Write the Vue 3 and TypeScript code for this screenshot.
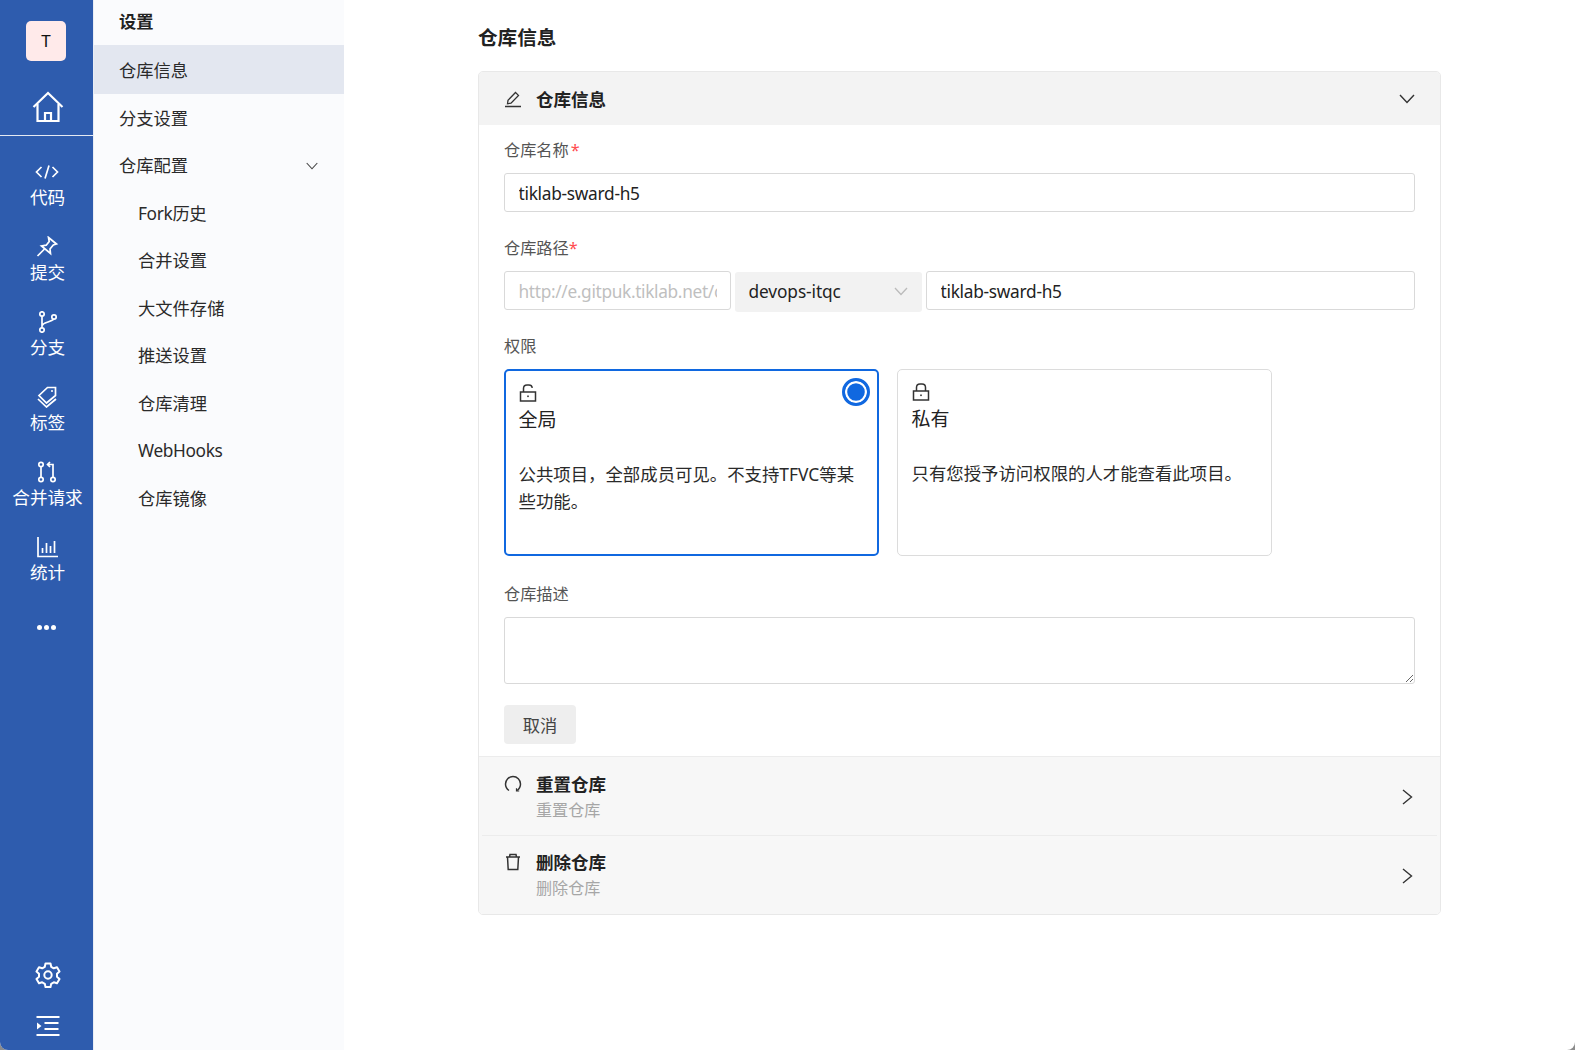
<script setup lang="ts">
const nav = [
  { key: 'code', label: '代码' },
  { key: 'pin', label: '提交' },
  { key: 'branch', label: '分支' },
  { key: 'tag', label: '标签' },
  { key: 'merge', label: '合并请求' },
  { key: 'chart', label: '统计' },
]
const children = [
  { text: 'Fork历史', latin: true },
  { text: '合并设置', latin: false },
  { text: '大文件存储', latin: false },
  { text: '推送设置', latin: false },
  { text: '仓库清理', latin: false },
  { text: 'WebHooks', latin: true },
  { text: '仓库镜像', latin: false },
]
</script>

<template>
  <div class="app">
    <aside class="rail">
      <div class="rail-top">
        <div class="logo">T</div>
        <svg class="home" width="32" height="32" viewBox="0 0 32 32" fill="none" stroke="#fff" stroke-width="2.200">
          <path d="M1.500 16 16 2l14.500 14" />
          <path d="M5.500 13v17h21V13" />
          <path d="M13 30v-8h6v8" />
        </svg>
      </div>
      <nav class="rail-nav">
        <div v-for="item in nav" :key="item.key" class="rail-item">
          <svg class="rail-icon" width="24" height="22" viewBox="0 0 24 22" fill="none" stroke="#fff" stroke-width="1.700">
            <template v-if="item.key === 'code'">
              <path d="M6.500 6 1.500 11l5 5M17.500 6l5 5-5 5M14 4.500 10 17.500" />
            </template>
            <template v-else-if="item.key === 'pin'">
              <path d="M13.500 1.500 21.500 8l-3.200 1-3.300 4 .5 4.500L6.500 10l4.700-.8 3-3.700z" />
              <path d="M9.500 13 2.500 20" />
            </template>
            <template v-else-if="item.key === 'branch'">
              <circle cx="7" cy="3" r="2.200" /><circle cx="7" cy="19" r="2.200" /><circle cx="19" cy="6" r="2.200" />
              <path d="M7 5.200v11.600M7 14.500c1-2 3-2.500 6-3.500 3-1 5-2 6-2.800" />
            </template>
            <template v-else-if="item.key === 'tag'">
              <path d="M12.500 1.500h8v8L11.500 17 4 9.500z" />
              <path d="M3 13l8.500 8L21 13" />
              <circle cx="17" cy="5" r="1" fill="#fff" stroke="none" />
            </template>
            <template v-else-if="item.key === 'merge'">
              <circle cx="6" cy="3.500" r="2.200" /><circle cx="6" cy="18.500" r="2.200" /><circle cx="18" cy="18.500" r="2.200" />
              <path d="M6 5.700v10.600M18 16.300V3.500h-5M15 1l-2.500 2.500L15 6" />
            </template>
            <template v-else>
              <path d="M3 1v19.500h20" />
              <path d="M7.500 17v-5M11.500 17V7M15.500 17v-7M19.500 17V5" />
            </template>
          </svg>
          <span class="rail-label">{{ item.label }}</span>
        </div>
        <div class="more"><i></i><i></i><i></i></div>
      </nav>
      <div class="rail-bottom">
        <svg width="26" height="26" viewBox="0 0 26 26" fill="none" stroke="#fff" stroke-width="2" stroke-linejoin="round">
          <path d="M10.500 1.500h5l.7 3.300 2.600 1.500 3.200-1 2.500 4.300-2.500 2.200v3l2.500 2.200-2.500 4.300-3.200-1-2.600 1.500-.7 3.300h-5l-.7-3.300-2.600-1.500-3.200 1-2.500-4.300 2.500-2.200v-3L1.500 9.600 4 5.300l3.200 1 2.600-1.500z" />
          <circle cx="13" cy="13" r="3.700" />
        </svg>
        <svg class="collapse" width="24" height="20" viewBox="0 0 24 20" fill="#fff">
          <rect x="0.500" y="0" width="23" height="2" />
          <rect x="8.500" y="6" width="14" height="2" />
          <rect x="8.500" y="12" width="14" height="2" />
          <rect x="0.500" y="18" width="23" height="2" />
          <path d="M1 6.500 5.500 10 1 13.500z" />
        </svg>
      </div>
    </aside>

    <aside class="menu">
      <div class="menu-title">设置</div>
      <div class="menu-item active">仓库信息</div>
      <div class="menu-item">分支设置</div>
      <div class="menu-item between">
        <span>仓库配置</span>
        <svg width="12" height="8" viewBox="0 0 12 8" fill="none" stroke="#444" stroke-width="1.100"><path d="M.7 1l5.300 5.800L11.300 1" /></svg>
      </div>
      <div v-for="c in children" :key="c.text" class="menu-item child" :class="{ latin: c.latin }">{{ c.text }}</div>
    </aside>

    <main class="main">
      <h1 class="title">仓库信息</h1>
      <section class="panel">
        <header class="panel-head">
          <svg width="18" height="18" viewBox="0 0 18 18" fill="none" stroke="#333" stroke-width="1.300">
            <path d="M1 16.500h16" />
            <path d="M3.500 13.800 4 10.300 11.500 2.500l3 2.900L7 13.200z" />
          </svg>
          <span class="head-text">仓库信息</span>
          <svg class="caret" width="16" height="10" viewBox="0 0 16 10" fill="none" stroke="#333" stroke-width="1.400"><path d="M1 1l7 7.500L15 1" /></svg>
        </header>

        <form class="form" @submit.prevent>
          <label class="field-label first">仓库名称<em class="star gap">*</em></label>
          <input class="input" value="tiklab-sward-h5" />

          <label class="field-label">仓库路径<em class="star">*</em></label>
          <div class="path-row">
            <input class="input url" placeholder="http://e.gitpuk.tiklab.net/c" />
            <div class="select">
              <span>devops-itqc</span>
              <svg width="14" height="9" viewBox="0 0 14 9" fill="none" stroke="#bbb" stroke-width="1.300"><path d="M1 1l6 6.500L13 1" /></svg>
            </div>
            <input class="input grow" value="tiklab-sward-h5" />
          </div>

          <label class="field-label perm-label">权限</label>
          <div class="cards">
            <div class="card selected">
              <svg class="lock" width="18" height="18" viewBox="0 0 18 18" fill="none" stroke="#333" stroke-width="1.500">
                <rect x="1.500" y="8" width="15" height="9" />
                <path d="M4.500 8V4.500C4.500 2.500 6 1 8 1h2c1.800 0 3 1.200 3.300 2.800" />
                <rect x="8.200" y="11.500" width="1.600" height="1.600" fill="#333" stroke="none" />
              </svg>
              <div class="card-name">全局</div>
              <p class="card-desc">公共项目，全部成员可见。不支持TFVC等某些功能。</p>
              <span class="radio"></span>
            </div>
            <div class="card">
              <svg class="lock up" width="18" height="18" viewBox="0 0 18 18" fill="none" stroke="#333" stroke-width="1.500">
                <rect x="1.500" y="8" width="15" height="9" />
                <path d="M4.500 8V4.500C4.500 2.500 6 1 8 1h2c2 0 3.500 1.500 3.500 3.500V8" />
                <rect x="8.200" y="11.500" width="1.600" height="1.600" fill="#333" stroke="none" />
              </svg>
              <div class="card-name">私有</div>
              <p class="card-desc">只有您授予访问权限的人才能查看此项目。</p>
            </div>
          </div>

          <label class="field-label desc-label">仓库描述</label>
          <textarea class="textarea"></textarea>

          <button type="button" class="cancel">取消</button>
        </form>

        <div class="row">
          <svg width="18" height="18" viewBox="0 0 18 18" fill="none" stroke="#333" stroke-width="1.500">
            <path d="M5 15.500C2.800 14 1.500 11.800 1.500 9a7.500 7.500 0 0 1 15 0c0 2.800-1.300 5-3.500 6.500" />
            <path d="M12.500 13.300v2.700h2.700" stroke-width="1.200" />
          </svg>
          <div class="row-text">
            <div class="row-title">重置仓库</div>
            <div class="row-sub">重置仓库</div>
          </div>
          <svg class="chev" width="11" height="16" viewBox="0 0 11 16" fill="none" stroke="#333" stroke-width="1.400"><path d="M1 1l8.500 7L1 15" /></svg>
        </div>
        <div class="row">
          <svg width="18" height="18" viewBox="0 0 18 18" fill="none" stroke="#333" stroke-width="1.500">
            <path d="M2 4h14M5.500 4l.5-2.500h6l.5 2.500" />
            <path d="M3.500 4l.7 12.500h9.600L14.500 4" />
          </svg>
          <div class="row-text">
            <div class="row-title">删除仓库</div>
            <div class="row-sub">删除仓库</div>
          </div>
          <svg class="chev" width="11" height="16" viewBox="0 0 11 16" fill="none" stroke="#333" stroke-width="1.400"><path d="M1 1l8.500 7L1 15" /></svg>
        </div>
      </section>
    </main>
  </div>
</template>

<style>
html, body { margin: 0; background: #8c8c8c; }
</style>

<style scoped>
.app {
  display: flex;
  height: 1050px;
  overflow: hidden;
  background: #fff;
  border-radius: 0 0 8px 8px;
  font-family: "Noto Sans", "Noto Sans CJK SC", sans-serif;
  color: #222;
}
.rail {
  width: 93px;
  flex: none;
  background: #2e5cae;
  color: #fff;
  display: flex;
  flex-direction: column;
}
.rail-top {
  display: flex;
  flex-direction: column;
  align-items: center;
  padding-top: 21px;
  box-sizing: border-box;
  height: 136px;
  border-bottom: 1px solid #e4e9f3;
}
.logo {
  width: 40px;
  height: 40px;
  border-radius: 5px;
  background: #ffeaea;
  color: #111;
  font-size: 17px;
  line-height: 40px;
  text-align: center;
  margin-left: -1px;
}
.home { margin-top: 30px; margin-left: 3px; }
.rail-nav {
  flex: 1;
  padding-top: 25px;
  padding-left: 2px;
  display: flex;
  flex-direction: column;
  align-items: center;
}
.rail-item {
  height: 75px;
  display: flex;
  flex-direction: column;
  align-items: center;
}
.rail-icon { display: block; }
.rail-label {
  font-size: 17.600px;
  line-height: 28px;
  white-space: nowrap;
}
.more {
  display: flex;
  gap: 2px;
  margin-top: 14px;
  margin-left: -3px;
}
.more i {
  width: 5px;
  height: 5px;
  border-radius: 50%;
  background: #fff;
}
.rail-bottom {
  display: flex;
  flex-direction: column;
  align-items: center;
  padding-bottom: 14px;
  padding-left: 2px;
}
.collapse { margin-top: 28px; }
.menu {
  width: 251px;
  flex: none;
  box-sizing: border-box;
  border-left: 1px solid #e9edf5;
  background: #fafbfd;
}
.menu-title {
  height: 45px;
  padding: 0 25px;
  font-size: 17.300px;
  font-weight: 700;
  line-height: 44px;
  box-sizing: border-box;
}
.menu-item {
  height: 47.500px;
  line-height: 47.500px;
  padding-left: 25px;
  padding-right: 26px;
  font-size: 17.300px;
  box-sizing: border-box;
  color: #2a2a2a;
}
.menu-item.active {
  background: #e3e7f0;
  height: 49px;
  margin-bottom: 0.500px;
  line-height: 51px;
}
.menu-item.between { display: flex; justify-content: space-between; align-items: center; }
.menu-item.child { padding-left: 44px; }
.menu-item.latin { letter-spacing: -0.350px; }
.main {
  flex: 1;
  min-width: 0;
  padding: 0 134px 0 134px;
}
.title {
  margin: 0;
  font-size: 19.600px;
  font-weight: 700;
  line-height: 26px;
  padding-top: 25px;
  height: 71px;
  box-sizing: border-box;
}
.panel {
  border: 1px solid #e8e8e8;
  border-radius: 5px;
  overflow: hidden;
}
.panel-head {
  height: 53px;
  background: #f3f3f3;
  display: flex;
  align-items: center;
  padding: 0 25px;
}
.head-text {
  margin-left: 14px;
  font-size: 17.500px;
  font-weight: 700;
}
.caret { margin-left: auto; }
.form {
  padding: 0 25px;
  display: flex;
  flex-direction: column;
  align-items: stretch;
}
.field-label {
  display: block;
  font-size: 16.200px;
  line-height: 24px;
  color: #555;
  margin-top: 24px;
  margin-bottom: 11px;
}
.field-label.first { margin-top: 13px; }
.field-label.perm-label { margin-top: 22px; }
.star {
  font-style: normal;
  color: #ff4d4f;
}
.star.gap { margin-left: 2px; }
.input {
  display: block;
  height: 39px;
  box-sizing: border-box;
  border: 1px solid #d9d9d9;
  border-radius: 3px;
  padding: 2px 13.500px 0;
  font: inherit;
  font-size: 17.300px;
  letter-spacing: -0.280px;
  color: #222;
  background: #fff;
  outline: none;
  width: 100%;
}
.input::placeholder { color: #bfbfbf; opacity: 1; }
.path-row {
  display: flex;
  gap: 4px;
  align-items: flex-start;
}
.url { width: 227px; flex: none; letter-spacing: -0.340px; }
.grow { flex: 1; width: auto; min-width: 0; }
.select {
  width: 187px;
  height: 40px;
  flex: none;
  box-sizing: border-box;
  background: #f2f2f2;
  border-radius: 3px;
  margin-top: 1px;
  padding: 0 14px 1px 13.500px;
  font-size: 17.300px;
  letter-spacing: -0.100px;
  display: flex;
  align-items: center;
  justify-content: space-between;
}
.cards {
  display: flex;
  gap: 18px;
}
.card {
  position: relative;
  width: 375px;
  height: 187px;
  box-sizing: border-box;
  border: 1px solid #dcdcdc;
  border-radius: 5px;
  padding: 14px 13.500px 0;
}
.card.selected {
  border: 2px solid #1068e0;
  padding: 13px 12.500px 0;
}
.lock { display: block; }
.lock.up { margin-top: -1px; margin-bottom: 1px; }
.card-name {
  font-size: 19px;
  line-height: 30px;
  margin-top: 3px;
}
.card-desc {
  margin: 26px 0 0;
  font-size: 17.400px;
  line-height: 27px;
  color: #2a2a2a;
}
.radio {
  position: absolute;
  top: 7px;
  right: 7px;
  width: 28px;
  height: 28px;
  box-sizing: border-box;
  border: 3.500px solid #1068e0;
  border-radius: 50%;
  background: #1068e0;
  box-shadow: inset 0 0 0 2.200px #fff;
}
.desc-label { margin-top: 26px; }
.textarea {
  display: block;
  height: 67px;
  box-sizing: border-box;
  border: 1px solid #d9d9d9;
  border-radius: 3px;
  resize: vertical;
  outline: none;
  width: 100%;
  font: inherit;
}
.cancel {
  align-self: flex-start;
  margin-top: 21px;
  margin-bottom: 12px;
  width: 72px;
  height: 39px;
  border: 0;
  border-radius: 4px;
  background: #eeeeee;
  color: #444;
  font: inherit;
  font-size: 17.300px;
}
.row {
  height: 79px;
  box-sizing: border-box;
  background: #f7f7f7;
  display: flex;
  padding: 0 25px;
  position: relative;
  border-top: 1px solid #ececec;
}
.row + .row { border-top: 0; }
.row + .row::before {
  content: "";
  position: absolute;
  top: 0;
  left: 3px;
  right: 3px;
  height: 1px;
  background: #ececec;
}
.row > svg:first-child { margin-top: 18px; }
.row-text { margin-left: 14px; padding-top: 14px; }
.row-title {
  font-size: 17.500px;
  font-weight: 700;
  line-height: 26px;
  margin-bottom: 1px;
}
.row-sub {
  font-size: 16.100px;
  line-height: 25px;
  color: #a6a6a6;
}
.chev { margin-left: auto; margin-right: 2px; align-self: center; padding-top: 2px; }
</style>
